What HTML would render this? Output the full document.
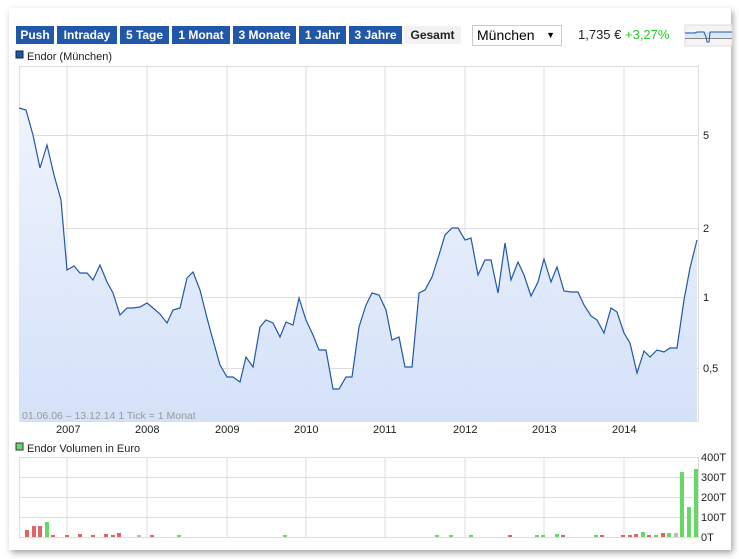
<!DOCTYPE html>
<html><head><meta charset="utf-8"><style>
body{margin:0;width:739px;height:559px;background:#fff;font-family:"Liberation Sans",sans-serif;overflow:hidden;position:relative}
.card{position:absolute;left:9px;top:8px;width:722px;height:542px;background:#fff;box-shadow:2px 3px 6px rgba(0,0,0,.35)}
.btn{position:absolute;top:26px;height:18px;background:#2157a9;color:#fff;font-weight:bold;font-size:12px;line-height:18px;text-align:center}
.sel{position:absolute;left:472px;top:25px;width:88px;height:19px;border:1px solid #ccc;font-size:14px;line-height:19px;padding-left:4px;box-sizing:border-box;width:90px;height:21px}
</style></head><body>
<div class="card"></div>
<div class="btn" style="left:16px;width:38px">Push</div>
<div class="btn" style="left:57px;width:60px">Intraday</div>
<div class="btn" style="left:120px;width:49px">5 Tage</div>
<div class="btn" style="left:172px;width:58px">1 Monat</div>
<div class="btn" style="left:233px;width:63px">3 Monate</div>
<div class="btn" style="left:299px;width:47px">1 Jahr</div>
<div class="btn" style="left:349px;width:53px">3 Jahre</div>
<div class="btn" style="left:404px;width:57px;background:#f2f2f2;color:#222">Gesamt</div>
<div class="sel">München<span style="position:absolute;right:6px;top:0;font-size:9px">&#9660;</span></div>
<div style="position:absolute;left:578px;top:27px;font-size:13px;color:#222">1,735 € <span style="color:#2c2">+3,27%</span></div>
<svg width="739" height="559" style="position:absolute;left:0;top:0" font-family="Liberation Sans" font-size="11">
<!-- mini thumb -->
<rect x="685" y="25" width="47" height="21" fill="#f4f4f4" stroke="#ddd"/>
<rect x="685" y="32" width="47" height="6" fill="#dce7f8"/>
<line x1="685" y1="38.5" x2="732" y2="38.5" stroke="#888"/>
<polyline points="685,33 695,33 697,32 704,32 706,37 707,42 709,42 710,32 732,32" fill="none" stroke="#2157a9"/>
<rect x="16" y="51" width="7" height="7" fill="#2157a9" stroke="#123"/>
<text x="27" y="60" fill="#222">Endor (München)</text>
<!-- price chart -->
<rect x="19.5" y="66.5" width="679" height="355" fill="#fff" stroke="#ddd"/>
<defs><linearGradient id="g" x1="0" y1="0" x2="0" y2="1"><stop offset="0" stop-color="#eef3fd"/><stop offset="1" stop-color="#d2e0f8"/></linearGradient></defs>
<g stroke="#dedede">
<line x1="67" y1="66" x2="67" y2="421"/><line x1="147" y1="66" x2="147" y2="421"/><line x1="227" y1="66" x2="227" y2="421"/><line x1="306" y1="66" x2="306" y2="421"/><line x1="385" y1="66" x2="385" y2="421"/><line x1="465" y1="66" x2="465" y2="421"/><line x1="544" y1="66" x2="544" y2="421"/><line x1="624" y1="66" x2="624" y2="421"/>
<line x1="19" y1="135.5" x2="698" y2="135.5"/><line x1="19" y1="228.5" x2="698" y2="228.5"/><line x1="19" y1="297.5" x2="698" y2="297.5"/><line x1="19" y1="368.5" x2="698" y2="368.5"/>
</g>
<polygon fill="url(#g)" opacity=".95" points="19,421 19,108 26,110 33,135 40,168 47,145 54,175 61,200 67,270 74,266 80,273 87,273 93,280 100,265 107,282 113,293 120,315 127,308 133,308 140,307 147,303 153,308 160,314 167,323 173,310 180,308 187,278 193,272 200,290 207,318 213,340 220,365 227,377 233,377 240,382 246,357 253,367 260,327 266,320 273,323 280,337 286,322 293,325 299,298 306,320 313,335 319,350 326,350 333,389 339,389 346,377 352,377 359,327 366,305 372,293 379,295 386,310 392,340 399,337 405,367 412,367 419,293 425,290 432,277 439,255 445,235 452,228 458,228 465,240 471,238 478,275 485,260 491,260 498,293 505,243 511,280 518,262 524,275 531,296 538,282 544,259 551,282 557,267 564,291 571,292 578,292 584,305 591,316 597,320 604,333 611,308 617,312 624,333 630,343 637,373 644,351 650,357 657,350 664,352 670,348 677,348 684,300 690,268 697,240 697,421"/>
<polyline fill="none" stroke="#2157a9" stroke-width="1.2" points="19,108 26,110 33,135 40,168 47,145 54,175 61,200 67,270 74,266 80,273 87,273 93,280 100,265 107,282 113,293 120,315 127,308 133,308 140,307 147,303 153,308 160,314 167,323 173,310 180,308 187,278 193,272 200,290 207,318 213,340 220,365 227,377 233,377 240,382 246,357 253,367 260,327 266,320 273,323 280,337 286,322 293,325 299,298 306,320 313,335 319,350 326,350 333,389 339,389 346,377 352,377 359,327 366,305 372,293 379,295 386,310 392,340 399,337 405,367 412,367 419,293 425,290 432,277 439,255 445,235 452,228 458,228 465,240 471,238 478,275 485,260 491,260 498,293 505,243 511,280 518,262 524,275 531,296 538,282 544,259 551,282 557,267 564,291 571,292 578,292 584,305 591,316 597,320 604,333 611,308 617,312 624,333 630,343 637,373 644,351 650,357 657,350 664,352 670,348 677,348 684,300 690,268 697,240"/>
<text x="22" y="419" fill="#999" font-size="10.5">01.06.06 – 13.12.14   1 Tick = 1 Monat</text>
<g fill="#222"><text x="703" y="139">5</text><text x="703" y="232">2</text><text x="703" y="301">1</text><text x="703" y="372">0,5</text>
<text x="56" y="433">2007</text><text x="135" y="433">2008</text><text x="215" y="433">2009</text><text x="294" y="433">2010</text><text x="373" y="433">2011</text><text x="453" y="433">2012</text><text x="532" y="433">2013</text><text x="612" y="433">2014</text>
<text x="27" y="452">Endor Volumen in Euro</text>
<text x="701" y="461">400T</text><text x="701" y="481">300T</text><text x="701" y="501">200T</text><text x="701" y="521">100T</text><text x="701" y="541">0T</text></g>
<rect x="16" y="443" width="7" height="7" fill="#66d866" stroke="#333"/>
<!-- volume -->
<g stroke="#dedede" fill="none">
<rect x="19.5" y="457.5" width="679" height="80"/>
<line x1="19" y1="477.5" x2="698" y2="477.5"/><line x1="19" y1="497.5" x2="698" y2="497.5"/><line x1="19" y1="517.5" x2="698" y2="517.5"/>
<line x1="67" y1="457" x2="67" y2="537"/><line x1="147" y1="457" x2="147" y2="537"/><line x1="227" y1="457" x2="227" y2="537"/><line x1="306" y1="457" x2="306" y2="537"/><line x1="385" y1="457" x2="385" y2="537"/><line x1="465" y1="457" x2="465" y2="537"/><line x1="544" y1="457" x2="544" y2="537"/><line x1="624" y1="457" x2="624" y2="537"/>
</g>
<g fill="#dd6666">
<rect x="25" y="530" width="4" height="7"/><rect x="32" y="526" width="4" height="11"/><rect x="38" y="526" width="4" height="11"/>
<rect x="51" y="535" width="4" height="2"/><rect x="65" y="535" width="4" height="2"/><rect x="78" y="534" width="4" height="3"/><rect x="91" y="535" width="4" height="2"/><rect x="104" y="534" width="4" height="3"/><rect x="111" y="535" width="4" height="2"/><rect x="117" y="533" width="4" height="4"/><rect x="150" y="535" width="4" height="2"/>
<rect x="508" y="535" width="4" height="2"/><rect x="561" y="535" width="4" height="2"/><rect x="600" y="535" width="4" height="2"/><rect x="621" y="535" width="4" height="2"/><rect x="628" y="535" width="4" height="2"/><rect x="634" y="534" width="4" height="3"/><rect x="647" y="535" width="4" height="2"/><rect x="661" y="533" width="4" height="4"/>
</g>
<g fill="#66d866">
<rect x="45" y="522" width="4" height="15"/><rect x="177" y="535" width="4" height="2"/><rect x="283" y="535" width="4" height="2"/><rect x="435" y="535" width="4" height="2"/><rect x="449" y="535" width="4" height="2"/><rect x="469" y="535" width="4" height="2"/><rect x="535" y="535" width="4" height="2"/><rect x="541" y="535" width="4" height="2"/><rect x="555" y="534" width="4" height="3"/><rect x="594" y="535" width="4" height="2"/><rect x="641" y="532" width="4" height="5"/><rect x="654" y="535" width="4" height="2"/><rect x="667" y="533" width="4" height="4"/>
<rect x="680" y="472" width="4" height="65"/><rect x="687" y="507" width="4" height="30"/><rect x="694" y="469" width="4" height="68"/>
</g>
<rect x="137" y="535" width="4" height="2" fill="#bbb"/><rect x="674" y="533" width="4" height="4" fill="#bbb"/>
</svg>
</body></html>
